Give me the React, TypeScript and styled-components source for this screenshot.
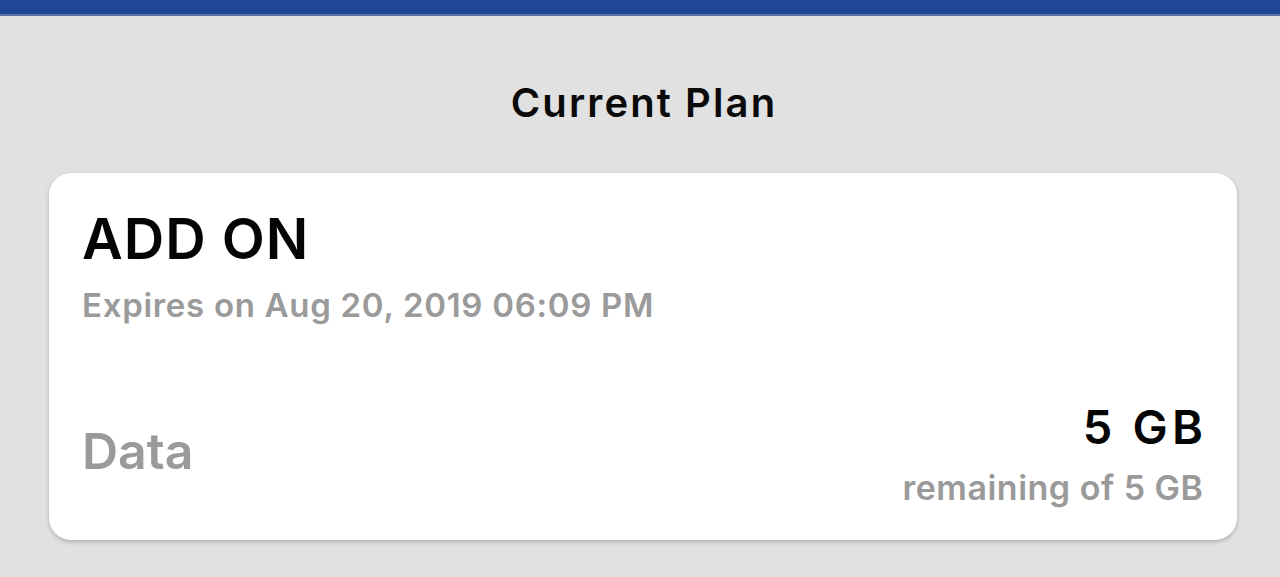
import React from "react";
import styled, { createGlobalStyle } from "styled-components";

const Global = createGlobalStyle`
  html, body { margin: 0; padding: 0; background: #e1e1e1; }
  body { font-family: Inter, "Noto Sans", "Liberation Sans", sans-serif; }
`;

const Page = styled.div`
  width: 1280px;
  height: 577px;
  background: #e1e1e1;
  overflow: hidden;
`;

const TopBar = styled.div`
  height: 14px;
  background: #1f4796;
  border-bottom: 2px solid #5a71ac;
`;

const Title = styled.h1`
  margin: 67px 0 0 8px;
  font-size: 40px;
  line-height: 40px;
  font-weight: 600;
  color: #0a0a0a;
  text-align: center;
  letter-spacing: 2.1px;
`;

const Card = styled.section`
  margin: 50px 43px 0 49px;
  padding: 38px 34px 35px 33px;
  background: #ffffff;
  border-radius: 22px;
  box-shadow: 0 2px 4px rgba(0, 0, 0, 0.22);
`;

const PlanName = styled.h2`
  margin: 0;
  font-size: 56px;
  line-height: 56px;
  font-weight: 600;
  color: #050505;
  letter-spacing: 1px;
`;

const Expiry = styled.div`
  margin-top: 22px;
  font-size: 33px;
  line-height: 33px;
  font-weight: 600;
  color: #9a9a9a;
  letter-spacing: 0.7px;
`;

const UsageRow = styled.div`
  margin-top: 82px;
  display: flex;
  justify-content: space-between;
  align-items: flex-end;
`;

const UsageLabel = styled.div`
  margin-bottom: 29px;
  font-size: 50px;
  line-height: 50px;
  font-weight: 600;
  color: #9a9a9a;
`;

const UsageValues = styled.div`
  display: flex;
  flex-direction: column;
  align-items: flex-end;
  gap: 22px;
`;

const Amount = styled.div`
  font-size: 47px;
  line-height: 45px;
  font-weight: 600;
  color: #050505;
  letter-spacing: 4.2px;
  margin-right: -4.2px;
`;

const Remaining = styled.div`
  font-size: 34px;
  line-height: 34px;
  font-weight: 600;
  color: #9a9a9a;
  letter-spacing: 0.5px;
  margin-right: -0.5px;
`;

export default function App() {
  return (
    <Page>
      <Global />
      <TopBar />
      <Title>Current Plan</Title>
      <Card>
        <PlanName>ADD ON</PlanName>
        <Expiry>Expires on Aug 20, 2019 06:09 PM</Expiry>
        <UsageRow>
          <UsageLabel>Data</UsageLabel>
          <UsageValues>
            <Amount>5 GB</Amount>
            <Remaining>remaining of 5 GB</Remaining>
          </UsageValues>
        </UsageRow>
      </Card>
    </Page>
  );
}
